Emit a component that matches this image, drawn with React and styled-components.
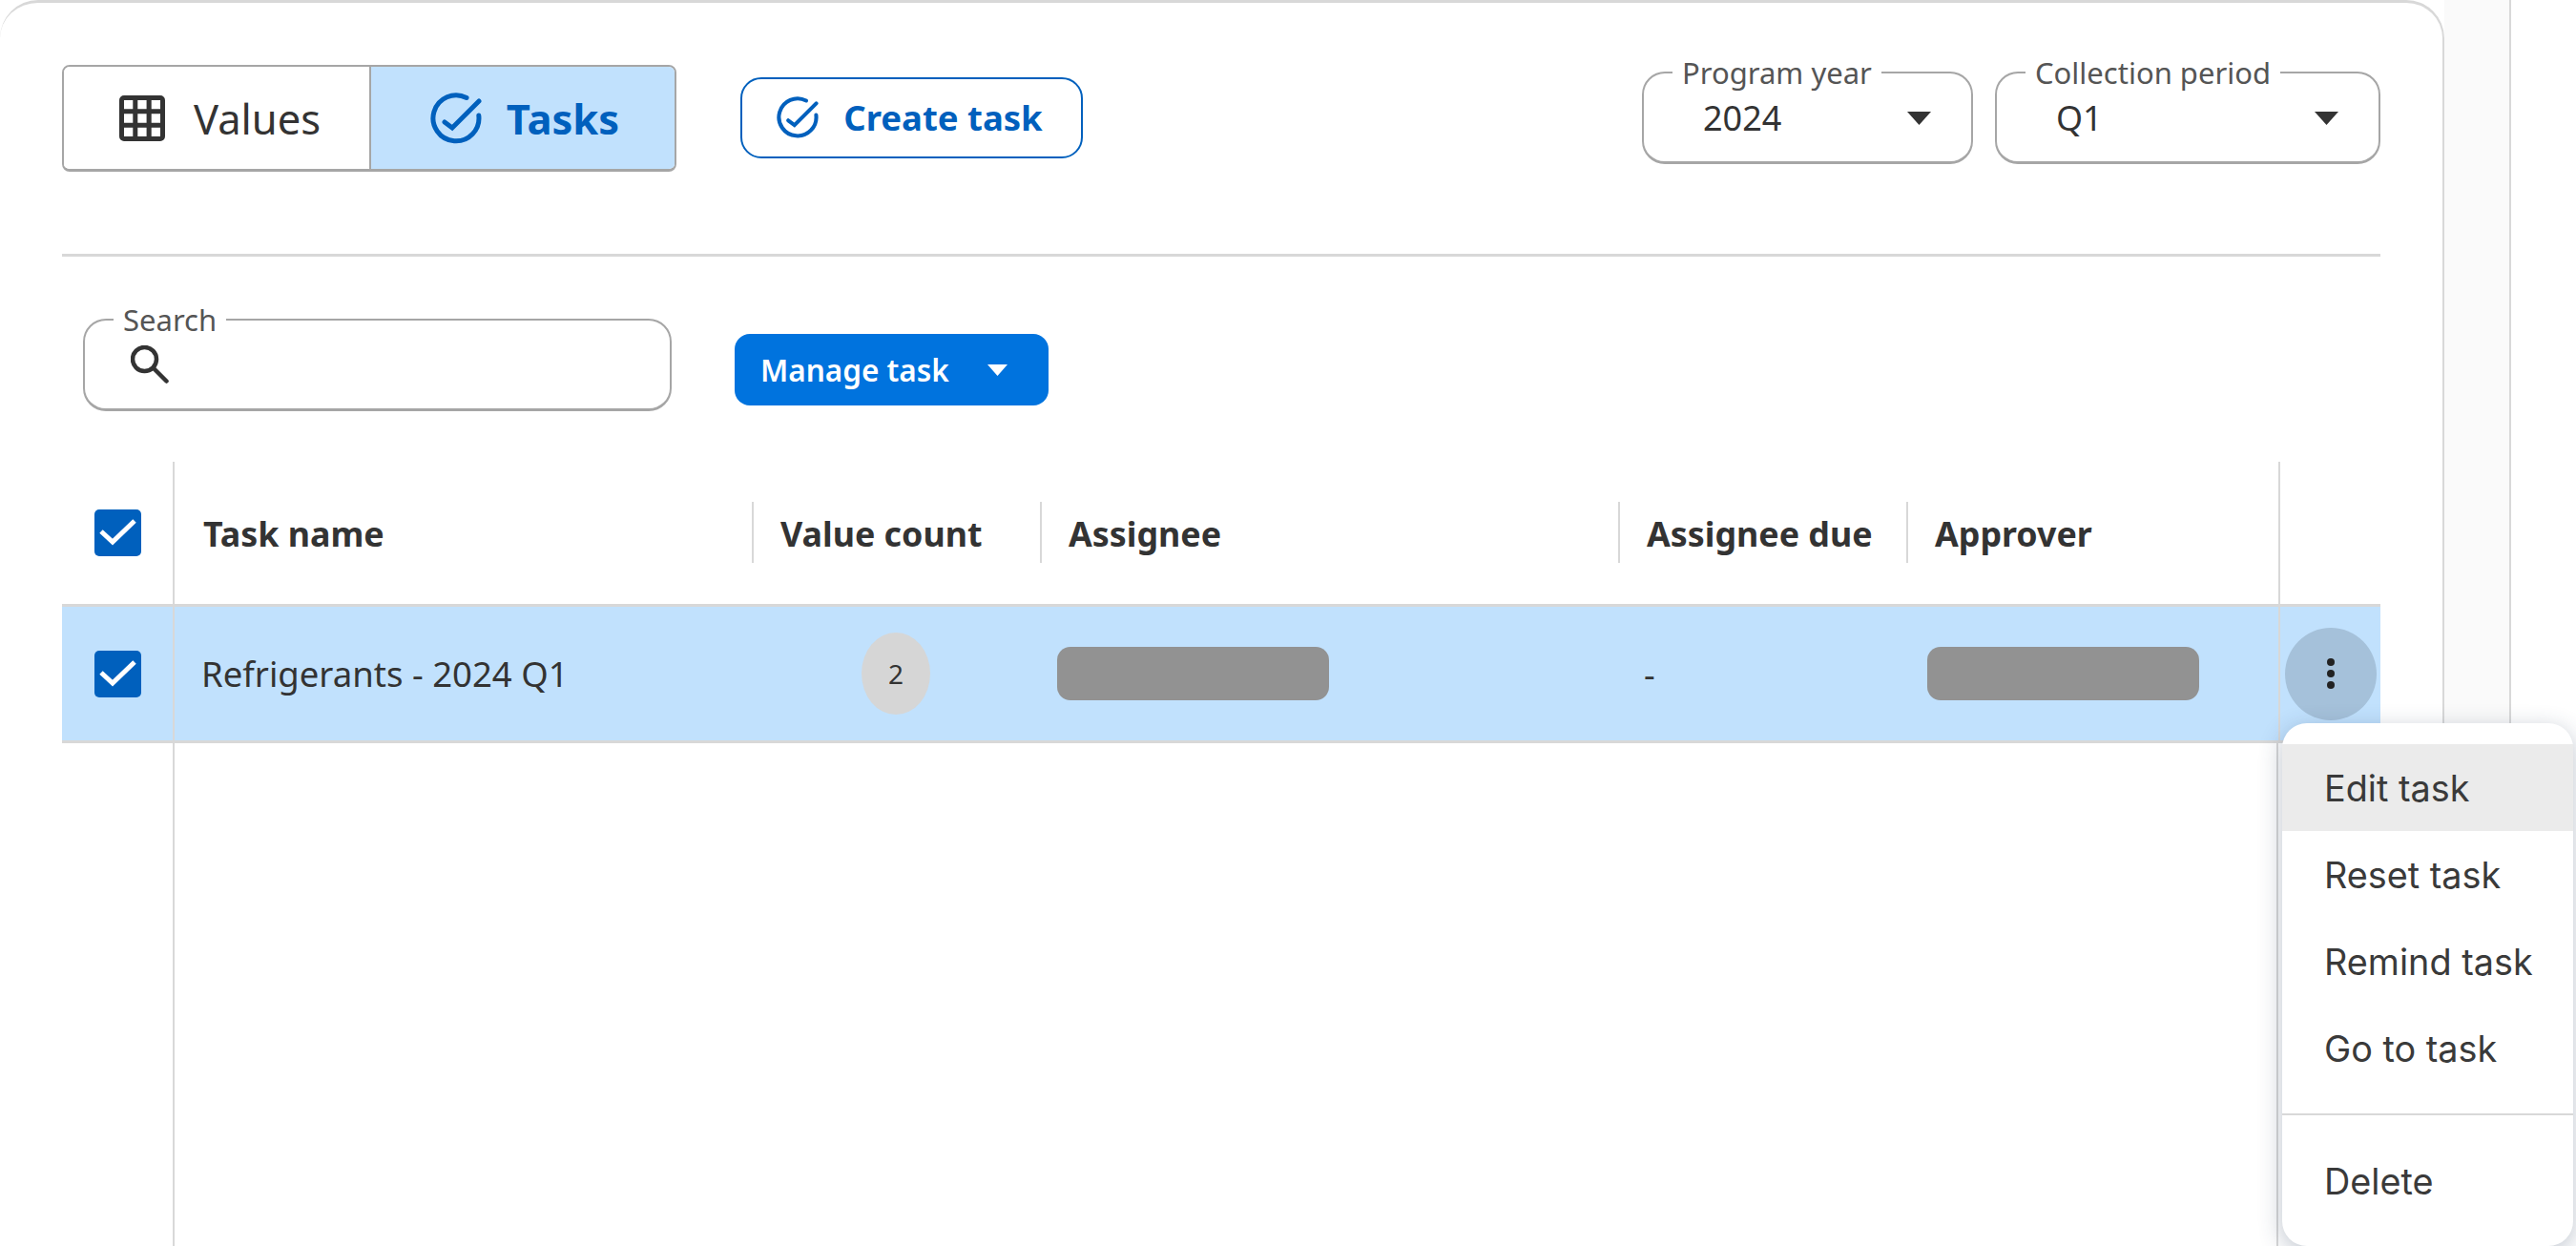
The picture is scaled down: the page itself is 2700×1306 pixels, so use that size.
import React from 'react';
import styled, { createGlobalStyle } from 'styled-components';

const GlobalStyle = createGlobalStyle`
  html, body { margin: 0; padding: 0; background: #fff; }
  body { font-family: "Noto Sans", "Liberation Sans", sans-serif; color: #333; }
`;

const BLUE = '#0060bd';
const LINE = '#d8d8d8';

const Page = styled.div`
  display: flex;
  width: 2700px;
  height: 1306px;
  overflow: hidden;
  background: #fff;
`;

const Panel = styled.main`
  box-sizing: border-box;
  width: 2562px;
  height: 1306px;
  padding: 0 65px 0 65px;
  border-top: 3px solid ${LINE};
  border-right: 2px solid ${LINE};
  border-top-left-radius: 40px;
  border-top-right-radius: 40px;
  display: flex;
  flex-direction: column;
`;

const Gutter = styled.aside`
  box-sizing: border-box;
  width: 70px;
  background: #fafafa;
  border-right: 2px solid ${LINE};
`;

const Toolbar = styled.div`
  display: flex;
  align-items: flex-start;
  height: 266px;
  padding-top: 56px;
  box-sizing: border-box;
  border-bottom: 3px solid ${LINE};
  flex: none;
`;

const Toggle = styled.div`
  box-sizing: border-box;
  display: flex;
  width: 644px;
  height: 112px;
  margin-top: 9px;
  border: 2px solid #a6a6a6;
  border-bottom-width: 3px;
  border-radius: 8px;
  overflow: hidden;
`;

const ToggleItem = styled.div`
  box-sizing: border-box;
  flex: none;
  width: 50%;
  display: flex;
  align-items: center;
  justify-content: center;
  gap: ${(p) => (p.$active ? 26 : 30)}px;
  padding-left: ${(p) => (p.$active ? 4 : 7)}px;
  font-size: 43.5px;
  font-weight: ${(p) => (p.$active ? 700 : 400)};
  color: ${(p) => (p.$active ? BLUE : '#333')};
  background: ${(p) => (p.$active ? '#c1e1fd' : '#fff')};
  & + & { border-left: 2px solid #a6a6a6; }
`;

const CreateButton = styled.button`
  box-sizing: border-box;
  display: flex;
  align-items: center;
  justify-content: center;
  gap: 26px;
  width: 359px;
  height: 85px;
  margin: 22px 0 0 67px;
  padding: 0 4px 2px 0;
  background: #fff;
  border: 2px solid ${BLUE};
  border-radius: 22px;
  color: ${BLUE};
  font: 700 36.5px "Noto Sans", sans-serif;
`;

const Filters = styled.div`
  display: flex;
  gap: 23px;
  margin-left: auto;
`;

const Outlined = styled.fieldset`
  box-sizing: border-box;
  margin: 0;
  width: ${(p) => p.$width}px;
  height: 113px;
  padding: 0 42px 0 30px;
  border: 2px solid #a6a6a6;
  border-bottom-width: 3px;
  border-radius: 24px;
  display: flex;
  align-items: center;
  justify-content: space-between;
`;

const Legend = styled.legend`
  padding: 0 10px;
  font-size: 31px;
  line-height: 34px;
  color: #555;
`;

const SelectValue = styled.span`
  font-size: 36px;
  line-height: 46px;
  margin: 0 0 14px 32px;
`;

const Caret = styled.svg`
  width: ${(p) => p.$width}px;
  height: ${(p) => p.$height}px;
  fill: ${(p) => p.$color};
  margin-bottom: ${(p) => p.$lift}px;
`;

const SearchRow = styled.div`
  display: flex;
  align-items: flex-start;
  flex: none;
  height: 215px;
  padding: 49px 0 0 22px;
  box-sizing: border-box;
`;

const SearchIcon = styled.svg`
  width: 40px;
  height: 40px;
  margin: 0 auto 16px 18px;
  fill: none;
  stroke: #333;
  stroke-width: 4.5;
  stroke-linecap: round;
`;

const ManageButton = styled.button`
  box-sizing: border-box;
  display: flex;
  align-items: center;
  justify-content: space-between;
  width: 329px;
  height: 75px;
  margin: 32px 0 0 66px;
  padding: 0 43px 0 27px;
  background: #0073de;
  border: 0;
  border-radius: 16px;
  color: #fff;
  font: 600 31.5px "Noto Sans", sans-serif;
`;

const Table = styled.div`
  flex: 1;
  display: flex;
  flex-direction: column;
  min-height: 0;
`;

const columns = '118px 605px 302px 606px 302px 390px 1fr';

const HeaderRow = styled.div`
  display: grid;
  grid-template-columns: ${columns};
  height: 149px;
  flex: none;
  box-sizing: border-box;
`;

const HeaderCell = styled.div`
  display: flex;
  align-items: center;
  padding-left: 30px;
  font-size: 35.8px;
  font-weight: 700;
  position: relative;
  ${(p) => p.$sep && `
    &::before {
      content: '';
      position: absolute;
      left: 0;
      top: 42px;
      height: 64px;
      width: 2px;
      background: ${LINE};
    }
  `}
`;

const CheckCell = styled.div`
  display: flex;
  align-items: center;
  justify-content: center;
  border-right: 2px solid ${LINE};
`;

const ActionCell = styled.div`
  display: flex;
  align-items: center;
  justify-content: center;
  border-left: 2px solid ${LINE};
`;

const Checkbox = styled.span`
  display: flex;
  align-items: center;
  justify-content: center;
  width: 49px;
  height: 49px;
  border-radius: 5px;
  background: ${BLUE};
`;

const BodyRow = styled.div`
  display: grid;
  grid-template-columns: ${columns};
  height: 146px;
  flex: none;
  box-sizing: border-box;
  background: #c1e1fd;
  border-top: 3px solid ${LINE};
  border-bottom: 3px solid ${LINE};
`;

const BodyCell = styled.div`
  display: flex;
  align-items: center;
  padding-left: ${(p) => p.$pad}px;
  font-size: 36.5px;
`;

const CountPill = styled.span`
  display: flex;
  align-items: center;
  justify-content: center;
  width: 72px;
  height: 86px;
  border-radius: 50%;
  background: #d6d6d6;
  font-size: 28px;
`;

const Redacted = styled.span`
  display: block;
  width: 285px;
  height: 56px;
  border-radius: 14px;
  background: #929292;
`;

const KebabButton = styled.button`
  display: flex;
  align-items: center;
  justify-content: center;
  width: 96px;
  height: 97px;
  padding: 0;
  border: 0;
  border-radius: 50%;
  background: #a5c1da;
`;

const Filler = styled.div`
  flex: 1;
  display: grid;
  grid-template-columns: ${columns};
`;

const FillerLeft = styled.div`
  border-right: 2px solid ${LINE};
`;

const FillerRight = styled.div`
  grid-column: 6 / 7;
  border-right: 2px solid ${LINE};
`;

const Menu = styled.ul`
  position: absolute;
  left: 2392px;
  top: 758px;
  box-sizing: border-box;
  width: 305px;
  height: 548px;
  margin: 0;
  padding: 22px 0 0;
  list-style: none;
  background: #fff;
  border-radius: 26px;
  box-shadow: 0 6px 24px rgba(40, 60, 90, 0.3);
`;

const MenuItem = styled.li`
  display: flex;
  align-items: center;
  height: 91px;
  padding-left: 44px;
  font-family: Inter, sans-serif;
  font-size: 37.8px;
  color: #3a3a3a;
  background: ${(p) => (p.$hover ? '#ebebeb' : 'transparent')};
`;

const MenuDivider = styled.li`
  height: 2px;
  margin: 23px 0;
  background: ${LINE};
`;

const GridIcon = () => (
  <svg width="48" height="48" viewBox="0 0 48 48">
    <path
      fill="#333"
      fillRule="evenodd"
      d="M5 0h38a5 5 0 0 1 5 5v38a5 5 0 0 1-5 5H5a5 5 0 0 1-5-5V5a5 5 0 0 1 5-5zM5 5v9.300h9.300V5zm14.300 0v9.300h9.300V5zm14.400 0v9.300H43V5zM5 19.300v9.400h9.300v-9.400zm14.300 0v9.400h9.300v-9.400zm14.400 0v9.400H43v-9.400zM5 33.700V43h9.300v-9.300zm14.300 0V43h9.300v-9.300zm14.400 0V43H43v-9.300z"
    />
  </svg>
);

const TaskIcon = ({ size, color }) => (
  <svg width={size} height={size} viewBox="0 0 54 54" fill="none" stroke={color} strokeWidth="5" strokeLinecap="round">
    <path d="M38 5.500A24 24 0 1 0 50.800 24" />
    <path d="M15 31l8 6L51 9" />
  </svg>
);

const Check = () => (
  <svg width="49" height="49" viewBox="0 0 49 49" fill="none" stroke="#fff" strokeWidth="5">
    <path d="M7 23l12 11L42 12" />
  </svg>
);

const CaretDown = ({ color = '#333', width = 25, height = 14, lift = 0 }) => (
  <Caret viewBox="0 0 26 14" preserveAspectRatio="none" $color={color} $width={width} $height={height} $lift={lift}>
    <path d="M0 0h26L13 14z" />
  </Caret>
);

export default function App() {
  return (
    <Page>
      <GlobalStyle />
      <Panel>
        <Toolbar>
          <Toggle>
            <ToggleItem>
              <GridIcon />
              Values
            </ToggleItem>
            <ToggleItem $active>
              <TaskIcon size={54} color={BLUE} />
              Tasks
            </ToggleItem>
          </Toggle>
          <CreateButton>
            <TaskIcon size={44} color={BLUE} />
            Create task
          </CreateButton>
          <Filters>
            <Outlined $width={347}>
              <Legend>Program year</Legend>
              <SelectValue>2024</SelectValue>
              <CaretDown lift={14} />
            </Outlined>
            <Outlined $width={404}>
              <Legend>Collection period</Legend>
              <SelectValue>Q1</SelectValue>
              <CaretDown lift={14} />
            </Outlined>
          </Filters>
        </Toolbar>
        <SearchRow>
          <Outlined $width={617}>
            <Legend>Search</Legend>
            <SearchIcon viewBox="0 0 40 40">
              <circle cx="14.500" cy="14.500" r="12.500" />
              <path d="M24 24l13.500 13.500" />
            </SearchIcon>
          </Outlined>
          <ManageButton>
            Manage task
            <CaretDown color="#fff" width={21} height={12} />
          </ManageButton>
        </SearchRow>
        <Table>
          <HeaderRow>
            <CheckCell><Checkbox><Check /></Checkbox></CheckCell>
            <HeaderCell>Task name</HeaderCell>
            <HeaderCell $sep>Value count</HeaderCell>
            <HeaderCell $sep>Assignee</HeaderCell>
            <HeaderCell $sep>Assignee due</HeaderCell>
            <HeaderCell $sep>Approver</HeaderCell>
            <ActionCell />
          </HeaderRow>
          <BodyRow>
            <CheckCell><Checkbox><Check /></Checkbox></CheckCell>
            <BodyCell $pad={28}>Refrigerants - 2024 Q1</BodyCell>
            <BodyCell $pad={115}><CountPill>2</CountPill></BodyCell>
            <BodyCell $pad={18}><Redacted /></BodyCell>
            <BodyCell $pad={27}>-</BodyCell>
            <BodyCell $pad={22}><Redacted /></BodyCell>
            <ActionCell>
              <KebabButton aria-label="More actions">
                <svg width="12" height="34" viewBox="0 0 12 34" fill="#222">
                  <circle cx="6" cy="5" r="4" />
                  <circle cx="6" cy="17" r="4" />
                  <circle cx="6" cy="29" r="4" />
                </svg>
              </KebabButton>
            </ActionCell>
          </BodyRow>
          <Filler>
            <FillerLeft />
            <FillerRight />
          </Filler>
        </Table>
      </Panel>
      <Gutter />
      <Menu>
        <MenuItem $hover>Edit task</MenuItem>
        <MenuItem>Reset task</MenuItem>
        <MenuItem>Remind task</MenuItem>
        <MenuItem>Go to task</MenuItem>
        <MenuDivider />
        <MenuItem>Delete</MenuItem>
      </Menu>
    </Page>
  );
}
